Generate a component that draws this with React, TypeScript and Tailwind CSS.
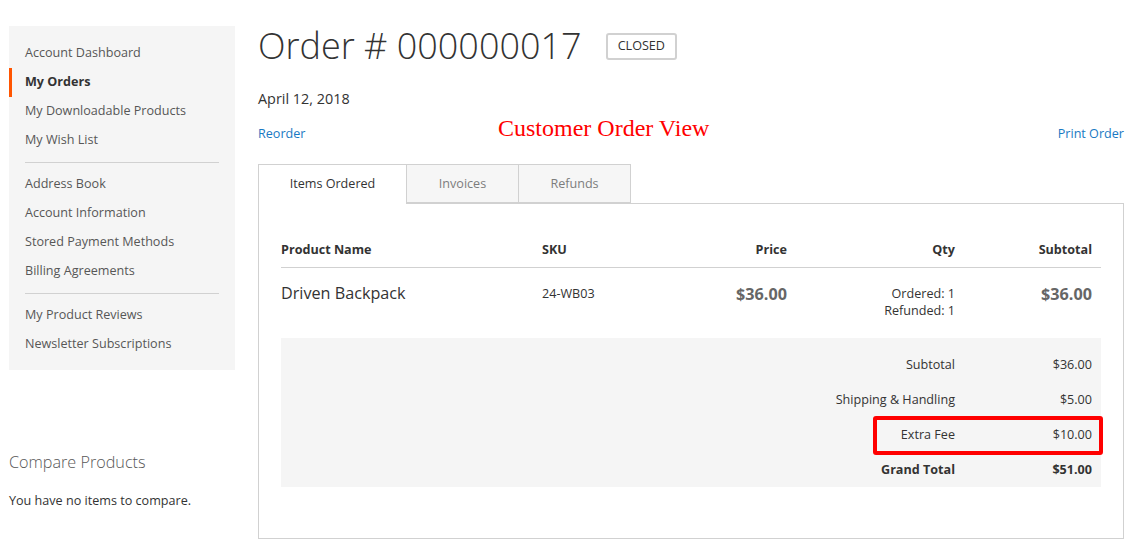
import React from 'react'

interface NavItem {
  label: string
  active?: boolean
}

const navGroups: NavItem[][] = [
  [
    { label: 'Account Dashboard' },
    { label: 'My Orders', active: true },
    { label: 'My Downloadable Products' },
    { label: 'My Wish List' }
  ],
  [
    { label: 'Address Book' },
    { label: 'Account Information' },
    { label: 'Stored Payment Methods' },
    { label: 'Billing Agreements' }
  ],
  [{ label: 'My Product Reviews' }, { label: 'Newsletter Subscriptions' }]
]

const totals = [
  { label: 'Subtotal', value: '$36.00' },
  { label: 'Shipping & Handling', value: '$5.00' },
  { label: 'Extra Fee', value: '$10.00', marked: true },
  { label: 'Grand Total', value: '$51.00', strong: true }
]

function Sidebar() {
  return (
    <aside className="w-[226px] shrink-0 pt-[26px]">
      <nav className="bg-[#f5f5f5] pt-[13px] pb-[11px]">
        {navGroups.map((group, gi) => (
          <div key={gi}>
            {gi > 0 && <div className="mx-[16px] my-[7px] h-px bg-[#d1d1d1]" />}
            {group.map((item) =>
              item.active ? (
                <div
                  key={item.label}
                  className="h-[29px] flex items-center border-l-[3px] border-[#ff5501] pl-[13px] text-[12.6px] font-bold text-[#333]"
                >
                  {item.label}
                </div>
              ) : (
                <a
                  key={item.label}
                  href="#"
                  className="h-[29px] flex items-center pl-[16px] text-[12.6px] text-[#575757]"
                >
                  {item.label}
                </a>
              )
            )}
          </div>
        ))}
      </nav>

      <div className="mt-[82px]">
        <h2 className="text-[16.2px] font-light leading-[20px] text-[#575757]">Compare Products</h2>
        <p className="mt-[20px] text-[12.6px] leading-[18px] text-[#333]">You have no items to compare.</p>
      </div>
    </aside>
  )
}

function OrderTable() {
  return (
    <div>
      {/* header */}
      <div className="flex h-[36px] items-center pt-[2px] border-b border-[#d1d1d1] text-[12.6px] font-bold text-[#333]">
        <div className="w-[261px]">Product Name</div>
        <div className="w-[138px]">SKU</div>
        <div className="w-[116px] pr-[9px] text-right">Price</div>
        <div className="w-[168px] pr-[9px] text-right">Qty</div>
        <div className="w-[137px] pr-[9px] text-right">Subtotal</div>
      </div>

      {/* item row */}
      <div className="flex h-[70px] items-start text-[#333]">
        <div className="w-[261px] pt-[15px] text-[16.2px] leading-[20px]">Driven Backpack</div>
        <div className="w-[138px] pt-[15px] text-[12.6px] leading-[22px]">24-WB03</div>
        <div className="w-[116px] pt-[15px] pr-[9px] text-right text-[16.2px] font-bold leading-[22px] text-[#666]">
          $36.00
        </div>
        <div className="w-[168px] pt-[17px] pr-[9px] text-right text-[12.6px] leading-[17px]">
          <div>Ordered: 1</div>
          <div>Refunded: 1</div>
        </div>
        <div className="w-[137px] pt-[15px] pr-[9px] text-right text-[16.2px] font-bold leading-[22px] text-[#666]">
          $36.00
        </div>
      </div>

      {/* totals */}
      <div className="h-[149px] bg-[#f5f5f5] pt-[10px]">
        {totals.map((t) => (
          <div
            key={t.label}
            className={`relative flex h-[35px] items-center text-[12.6px] text-[#333] ${t.strong ? 'font-bold' : ''}`}
          >
            <div className="flex-1 pr-[9px] text-right">{t.label}</div>
            <div className="w-[137px] pr-[9px] text-right">{t.value}</div>
            {t.marked && (
              <div className="absolute top-[-2px] bottom-[-2px] right-[-2px] w-[230px] rounded-[3px] border-4 border-[#ff0000]" />
            )}
          </div>
        ))}
      </div>
    </div>
  )
}

export default function App() {
  const tabs = ['Items Ordered', 'Invoices', 'Refunds']

  return (
    <div className="w-[1132px] h-[545px] overflow-hidden bg-white font-['Open_Sans',sans-serif] text-[#333]">
      <div className="flex pl-[9px] gap-[23px]">
        <Sidebar />

        <main className="w-[866px] shrink-0 pt-[22px]">
          <div className="flex items-center">
            <h1 className="text-[36px] font-light leading-[48px] text-[#333]">Order # 000000017</h1>
            <span className="ml-[24px] flex h-[27px] items-center rounded-[3px] border-2 border-[#d1d1d1] px-[10px] text-[12.6px] uppercase text-[#333]">
              Closed
            </span>
          </div>

          <div className="mt-[19px] text-[14.4px] leading-[20px]">April 12, 2018</div>

          <div className="relative mt-[16px] flex justify-between text-[12.6px] leading-[18px]">
            <a href="#" className="text-[#1979c3]">Reorder</a>
            <span className="absolute left-[240px] top-[-11px] font-['Liberation_Serif',serif] text-[24px] leading-[28px] text-[#ff0000]">
              Customer Order View
            </span>
            <a href="#" className="text-[#1979c3]">Print Order</a>
          </div>

          <div className="mt-[21px] flex">
            {tabs.map((tab, i) =>
              i === 0 ? (
                <div
                  key={tab}
                  className="relative z-10 flex h-[40px] w-[149px] items-center justify-center border border-b-0 border-[#d1d1d1] bg-white text-[12.6px] text-[#333]"
                >
                  {tab}
                </div>
              ) : (
                <div
                  key={tab}
                  className="flex h-[39px] w-[112px] items-center justify-center pt-[2px] border border-l-0 border-[#d1d1d1] bg-[#f6f6f6] text-[12.6px] text-[#7d7d7d]"
                >
                  {tab}
                </div>
              )
            )}
          </div>

          <div className="-mt-px border border-[#d1d1d1] px-[22px] pt-[28px] pb-[51px]">
            <OrderTable />
          </div>
        </main>
      </div>
    </div>
  )
}
